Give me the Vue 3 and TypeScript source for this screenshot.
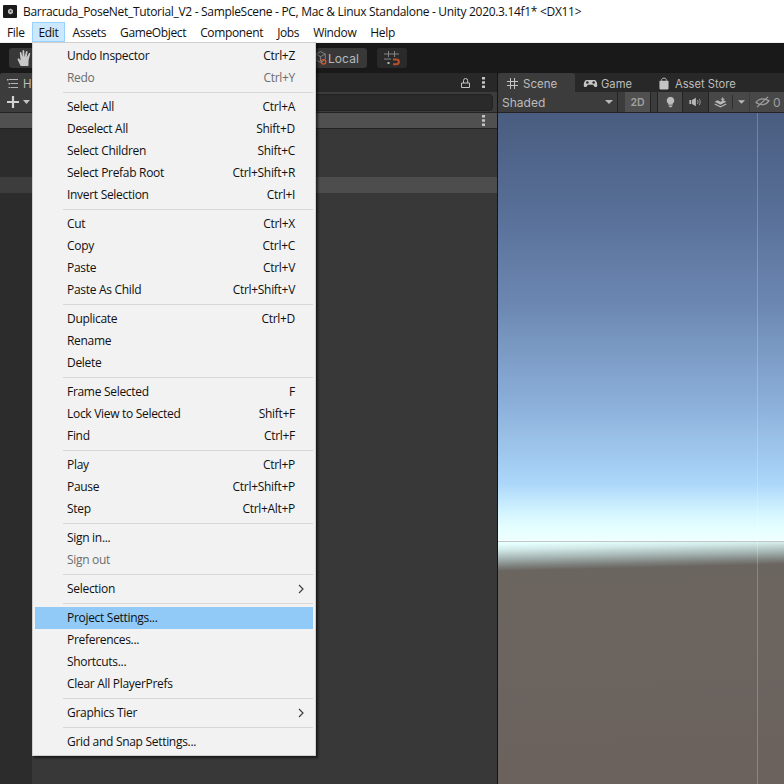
<script setup lang="ts">
interface MenuItem {
  label: string
  keys?: string
  disabled?: boolean
  active?: boolean
  sub?: boolean
}

const menuNames = ['File', 'Edit', 'Assets', 'GameObject', 'Component', 'Jobs', 'Window', 'Help']

const groups: MenuItem[][] = [
  [
    { label: 'Undo Inspector', keys: 'Ctrl+Z' },
    { label: 'Redo', keys: 'Ctrl+Y', disabled: true },
  ],
  [
    { label: 'Select All', keys: 'Ctrl+A' },
    { label: 'Deselect All', keys: 'Shift+D' },
    { label: 'Select Children', keys: 'Shift+C' },
    { label: 'Select Prefab Root', keys: 'Ctrl+Shift+R' },
    { label: 'Invert Selection', keys: 'Ctrl+I' },
  ],
  [
    { label: 'Cut', keys: 'Ctrl+X' },
    { label: 'Copy', keys: 'Ctrl+C' },
    { label: 'Paste', keys: 'Ctrl+V' },
    { label: 'Paste As Child', keys: 'Ctrl+Shift+V' },
  ],
  [
    { label: 'Duplicate', keys: 'Ctrl+D' },
    { label: 'Rename' },
    { label: 'Delete' },
  ],
  [
    { label: 'Frame Selected', keys: 'F' },
    { label: 'Lock View to Selected', keys: 'Shift+F' },
    { label: 'Find', keys: 'Ctrl+F' },
  ],
  [
    { label: 'Play', keys: 'Ctrl+P' },
    { label: 'Pause', keys: 'Ctrl+Shift+P' },
    { label: 'Step', keys: 'Ctrl+Alt+P' },
  ],
  [
    { label: 'Sign in...' },
    { label: 'Sign out', disabled: true },
  ],
  [{ label: 'Selection', sub: true }],
  [
    { label: 'Project Settings...', active: true },
    { label: 'Preferences...' },
    { label: 'Shortcuts...' },
    { label: 'Clear All PlayerPrefs' },
  ],
  [{ label: 'Graphics Tier', sub: true }],
  [{ label: 'Grid and Snap Settings...' }],
]
</script>

<template>
  <div class="window">
    <div class="titlebar">
      <svg class="app-icon" width="14" height="13" viewBox="0 0 14 13">
        <rect width="14" height="13" rx="1" fill="#1a1a1a" />
        <path d="M7.5 3.5 10 5V8L7.5 9.5 5 8V5Z" fill="#b8b8b8" />
        <path d="M7.5 5.2 8.8 6 7.5 7 6.4 6.2Z" fill="#333" />
      </svg>
      <span>Barracuda_PoseNet_Tutorial_V2 - SampleScene - PC, Mac &amp; Linux Standalone - Unity 2020.3.14f1* &lt;DX11&gt;</span>
    </div>

    <div class="menubar">
      <span v-for="name in menuNames" :key="name" class="menubar-item" :class="{ open: name === 'Edit' }">{{ name }}</span>
    </div>

    <div class="toolbar">
      <div class="tool hand">
        <svg width="18" height="18" viewBox="0 0 18 18">
          <path d="M4.6 17 1.6 10.6C1.2 9.6 2.6 9 3.2 9.8L4.6 11.6 3.8 3.8C3.7 2.7 5.2 2.6 5.4 3.6L6.4 8 6.6 1.9C6.6.8 8.2.8 8.2 1.9L8.6 8 10 2.6C10.3 1.6 11.7 2 11.5 3L10.6 8.4 12.8 4.4C13.3 3.5 14.6 4.1 14.2 5.1L12.6 11 12.4 17Z" fill="#c8c8c8" />
        </svg>
      </div>
      <div class="tool local">
        <svg width="15" height="18" viewBox="0 0 15 18">
          <path d="M1 4.5 6.5 1.5 12 4.5V10L8 14H6L1 11ZM1 4.5 6.5 7.5 12 4.5M6.5 7.5V13" fill="none" stroke="#8c8c8c" />
          <circle cx="10" cy="13.5" r="2.6" fill="none" stroke="#e0562a" stroke-width="1.5" />
        </svg>
        <span>Local</span>
      </div>
      <div class="tool snap">
        <svg width="16" height="15" viewBox="0 0 16 15">
          <path d="M4.5 0V6M10.5 0V6M0 3H15M0 8H7" fill="none" stroke="#858585" />
          <path d="M9 8.5H12.5A2.3 2.3 0 0 1 12.5 13.2H9" fill="none" stroke="#b9502c" stroke-width="2" />
          <rect x="3.5" y="11" width="2" height="2" fill="#b5b5b5" />
        </svg>
      </div>
    </div>

    <div class="workspace">
      <section class="hierarchy">
        <div class="tabstrip">
          <div class="tab hierarchy-tab">
            <svg width="11" height="9" viewBox="0 0 11 9">
              <path d="M2 .5H11M3.5 4.5H11M3.5 8.5H11" stroke="#b5b5b5" />
              <path d="M0 0H1.5V1.5H0ZM1.5 4H3V5.5H1.5ZM1.5 8H3V9H1.5Z" fill="#b5b5b5" />
            </svg>
            <span>H</span>
          </div>
          <div class="tab-tools">
            <svg width="9" height="10" viewBox="0 0 9 10">
              <path d="M2.5 5V2.6A2.1 2.1 0 0 1 6.7 2.6V5M.5 5H8.5V9.5H.5Z" fill="none" stroke="#c4c4c4" />
            </svg>
            <svg class="dots" width="3" height="11" viewBox="0 0 3 11">
              <path d="M0 0H3V2.5H0ZM0 4.2H3V6.7H0ZM0 8.5H3V11H0Z" fill="#c4c4c4" />
            </svg>
          </div>
        </div>
        <div class="search-row">
          <svg width="14" height="14" viewBox="0 0 14 14">
            <path d="M7 1V13M1 7H13" stroke="#d2d2d2" stroke-width="2.2" />
          </svg>
          <svg width="7" height="4" viewBox="0 0 7 4">
            <path d="M0 0H7L3.5 4Z" fill="#c4c4c4" />
          </svg>
          <div class="search-box"></div>
        </div>
        <div class="scene-row">
          <svg class="dots" width="3" height="11" viewBox="0 0 3 11">
            <path d="M0 0H3V2.5H0ZM0 4.2H3V6.7H0ZM0 8.5H3V11H0Z" fill="#c4c4c4" />
          </svg>
        </div>
        <div class="tree">
          <div class="tree-hover"></div>
          <div class="gutter"></div>
        </div>
      </section>

      <section class="scene">
        <div class="tabstrip">
          <div class="tab scene-tab">
            <svg width="11" height="11" viewBox="0 0 11 11">
              <path d="M3.5 0V11M7.5 0V11M0 3.5H11M0 7.5H11" stroke="#c4c4c4" />
            </svg>
            <span>Scene</span>
          </div>
          <div class="tab game-tab">
            <svg width="15" height="9" viewBox="0 0 16 10">
              <path d="M4 1H12C14.5 1 15.5 4 15.5 7 15.5 9.5 13 9.5 12 8L11 6.5H5L4 8C3 9.5.5 9.5.5 7 .5 4 1.5 1 4 1Z" fill="#c4c4c4" />
              <circle cx="4.5" cy="4" r="1.4" fill="#282828" />
              <circle cx="11.5" cy="4" r="1.4" fill="#282828" />
            </svg>
            <span>Game</span>
          </div>
          <div class="tab store-tab">
            <svg width="10" height="13" viewBox="0 0 11 14">
              <path d="M3 4V2.5C3 .6 8 .6 8 2.5V4" fill="none" stroke="#c4c4c4" />
              <path d="M.5 4H10.5V12.5C10.5 13 10 13.5 9.5 13.5H1.5C1 13.5.5 13 .5 12.5Z" fill="#c4c4c4" />
            </svg>
            <span>Asset Store</span>
          </div>
        </div>

        <div class="scene-bar">
          <div class="shaded">
            <span>Shaded</span>
            <svg width="8" height="4" viewBox="0 0 8 4"><path d="M0 0H8L4 4Z" fill="#b8b8b8" /></svg>
          </div>
          <div class="bar-btn two-d">2D</div>
          <div class="bar-btn light">
            <svg width="9" height="12" viewBox="0 0 12 15">
              <path d="M6 .5A5 5 0 0 1 9 9.5V11H3V9.5A5 5 0 0 1 6 .5Z" fill="#bcbcbc" />
              <path d="M3.5 12H8.5V13L7 14.5H5L3.5 13Z" fill="#bcbcbc" />
            </svg>
          </div>
          <div class="bar-btn audio">
            <svg width="13" height="10" viewBox="0 0 17 12">
              <path d="M.5 3.5H3V8.5H.5ZM4 3.5 9 .5V11.5L4 8.5Z" fill="#b8b8b8" />
              <path d="M11 3.5C12 5 12 7 11 8.5M13.5 2C15 4.5 15 7.5 13.5 10" fill="none" stroke="#b8b8b8" />
            </svg>
          </div>
          <div class="bar-btn layers">
            <svg width="13" height="11" viewBox="0 0 18 14">
              <path d="M1 6 5 4 9 6 13 4 17 6 9 10Z" fill="#b8b8b8" />
              <path d="M1 9 9 13 17 9" fill="none" stroke="#b8b8b8" stroke-width="1.5" />
              <path d="M12 0V5M9.5 2.5H14.5" stroke="#b8b8b8" stroke-width="1.5" />
            </svg>
            <i></i>
            <svg width="7" height="4" viewBox="0 0 8 4"><path d="M0 0H8L4 4Z" fill="#b8b8b8" /></svg>
          </div>
          <div class="bar-btn hidden-count">
            <svg width="15" height="12" viewBox="0 0 16 13">
              <path d="M1 7C4 3 9 2 15 5 12 10 6 11 1 7Z" fill="none" stroke="#a0a0a0" stroke-width="1.3" />
              <path d="M2 12 14 1" stroke="#a0a0a0" stroke-width="1.3" />
            </svg>
            <span>0</span>
          </div>
        </div>

        <div class="viewport">
          <div class="sky"></div>
          <div class="horizon"></div>
          <div class="ground"></div>
          <div class="axis"></div>
        </div>
      </section>
    </div>

    <div class="menu">
      <template v-for="(group, i) in groups" :key="i">
        <div v-if="i > 0" class="separator"></div>
        <div
          v-for="item in group"
          :key="item.label"
          class="menu-item"
          :class="{ disabled: item.disabled, active: item.active }"
        >
          <span>{{ item.label }}</span>
          <span v-if="item.keys">{{ item.keys }}</span>
          <svg v-if="item.sub" class="chevron" width="6" height="10" viewBox="0 0 6 10">
            <path d="M1 1 5 5 1 9" fill="none" stroke="#404040" stroke-width="1.2" />
          </svg>
        </div>
      </template>
    </div>
  </div>
</template>

<style scoped>
.window {
  position: relative;
  display: flex;
  flex-direction: column;
  width: 784px;
  height: 784px;
  overflow: hidden;
  background: #383838;
  font-family: "Open Sans", "Liberation Sans", sans-serif;
  font-size: 12px;
}

.titlebar {
  display: flex;
  align-items: center;
  gap: 6px;
  height: 22px;
  padding-left: 3px;
  background: #fff;
  color: #101010;
  letter-spacing: -0.31px;
}

.app-icon {
  flex: none;
}

.menubar {
  display: flex;
  height: 20px;
  background: #fff;
  color: #101010;
  border-bottom: 1px solid #f0f0f0;
}

.menubar-item {
  display: flex;
  align-items: center;
  padding: 0 7px;
  letter-spacing: -0.36px;
  border: 1px solid transparent;
  border-width: 1px 0;
}

.menubar-item.open {
  background: #cce8ff;
  border: 1px solid #99d1ff;
  padding: 0 6px;
}

.toolbar {
  display: flex;
  align-items: center;
  height: 30px;
  background: #191919;
}

.tool {
  display: flex;
  align-items: center;
  justify-content: center;
  height: 20px;
  border-radius: 3px;
  background: #383838;
  color: #b8b8b8;
}

.hand {
  width: 32px;
  margin-left: 9px;
}

.local {
  width: 52px;
  box-sizing: border-box;
  margin-left: 274px;
  padding-right: 8px;
  justify-content: flex-end;
  gap: 0;
  font-family: Inter, sans-serif;
  letter-spacing: 0.1px;
  font-size: 12px;
}

.snap {
  width: 30px;
  margin-left: 10px;
  background: #2a2a2a;
}

.workspace {
  flex: 1;
  display: flex;
  min-height: 0;
  gap: 1px;
  background: #151515;
  font-family: Inter, sans-serif;
  color: #bdbdbd;
}

.hierarchy {
  display: flex;
  flex-direction: column;
  width: 497px;
  background: #383838;
}

.tabstrip {
  display: flex;
  height: 19px;
  background: #282828;
}

.tab {
  display: flex;
  align-items: center;
  height: 19px;
  box-sizing: border-box;
  padding-top: 2px;
  font-size: 11.5px;
}

.hierarchy-tab {
  width: 90px;
  gap: 5px;
  padding-left: 7px;
  background: #3c3c3c;
  border-radius: 3px 3px 0 0;
}

.tab-tools {
  display: flex;
  align-items: center;
  gap: 12px;
  margin-left: auto;
  padding-right: 12px;
}

.search-row {
  display: flex;
  align-items: center;
  gap: 3px;
  height: 20px;
  padding: 0 4px 0 6px;
  background: #3c3c3c;
  border-bottom: 1px solid #232323;
}

.search-box {
  flex: 1;
  height: 15px;
  margin-left: 8px;
  background: #2a2a2a;
  border: 1px solid #212121;
  border-radius: 4px;
}

.scene-row {
  display: flex;
  align-items: center;
  justify-content: flex-end;
  height: 15px;
  padding-right: 12px;
  background: #505050;
  border-bottom: 1px solid #232323;
}

.tree {
  position: relative;
  flex: 1;
  padding-top: 48px;
}

.tree-hover {
  height: 16px;
  background: #4d4d4d;
}

.gutter {
  position: absolute;
  inset: 0 auto 0 0;
  width: 32px;
  background: rgba(0, 0, 0, 0.2);
}

.scene {
  flex: 1;
  display: flex;
  flex-direction: column;
  min-width: 0;
}

.scene-tab {
  width: 77px;
  gap: 5px;
  padding-left: 9px;
  background: #3c3c3c;
  border-radius: 3px 3px 0 0;
}

.game-tab {
  margin-left: 8px;
  gap: 3px;
  font-size: 11.2px;
}

.store-tab {
  margin-left: 27px;
  gap: 6px;
  font-size: 11.2px;
}

.scene-bar {
  display: flex;
  height: 20px;
  background: #3c3c3c;
  border-bottom: 1px solid #232323;
}

.shaded {
  display: flex;
  align-items: center;
  justify-content: space-between;
  width: 120px;
  box-sizing: border-box;
  padding: 0 4px 0 4px;
  border-right: 1px solid #232323;
}

.bar-btn {
  display: flex;
  align-items: center;
  justify-content: center;
  height: 20px;
}

.two-d {
  width: 25px;
  margin-left: 7px;
  background: #505050;
  border-right: 1px solid #232323;
  font-size: 10.5px;
  font-weight: 600;
  color: #a0a0a0;
}

.light {
  width: 25px;
  margin-left: 6px;
  background: #484848;
  border-left: 1px solid #232323;
  box-sizing: border-box;
}

.audio {
  width: 26px;
  box-sizing: border-box;
  border-left: 1px solid #232323;
  background: #383838;
}

.layers {
  width: 41px;
  gap: 5px;
  box-sizing: border-box;
  border-left: 1px solid #232323;
  background: #484848;
}

.layers i {
  width: 1px;
  height: 14px;
  background: #2e2e2e;
}

.hidden-count {
  flex: 1;
  gap: 3px;
  justify-content: flex-start;
  padding-left: 5px;
  margin-left: 1px;
  background: #484848;
  color: #a0a0a0;
}

.viewport {
  position: relative;
  flex: 1;
  display: flex;
  flex-direction: column;
}

.sky {
  height: 428px;
  background: linear-gradient(
    180deg,
    #4a5d80 0,
    #566d95 90px,
    #6b87b1 190px,
    #8bafd9 290px,
    #acd6fa 370px,
    #d4f5ff 400px,
    #e6ffff 416px,
    #f0ffff 428px
  );
}

.horizon {
  height: 1px;
  background: #c4c6c6;
}

.ground {
  flex: 1;
  background: linear-gradient(
    178.6deg,
    #e6ffff 2px,
    #d0e8e6 8px,
    #a8b8b6 16px,
    #7f8380 24px,
    #6b6560 29px,
    #6b625e 100%
  );
}

.axis {
  position: absolute;
  top: 0;
  bottom: 0;
  left: 259px;
  width: 1px;
  background: rgba(255, 255, 255, 0.22);
}

.menu {
  position: absolute;
  top: 42px;
  left: 32px;
  width: 284px;
  box-sizing: border-box;
  padding: 2px;
  background: #f2f2f2;
  border: 1px solid #cfcfcf;
  box-shadow: 2px 2px 2px rgba(0, 0, 0, 0.55);
  color: #101010;
  letter-spacing: -0.3px;
}

.menu-item {
  position: relative;
  display: flex;
  align-items: center;
  justify-content: space-between;
  box-sizing: border-box;
  height: 22px;
  padding: 0 18px 2px 32px;
}

.menu-item.disabled {
  color: #6d6d6d;
}

.menu-item.active {
  background: #91c9f7;
}

.chevron {
  position: absolute;
  right: 9px;
  top: 6px;
}

.separator {
  height: 1px;
  margin: 3px 0 3px 28px;
  background: #d7d7d7;
}
</style>
